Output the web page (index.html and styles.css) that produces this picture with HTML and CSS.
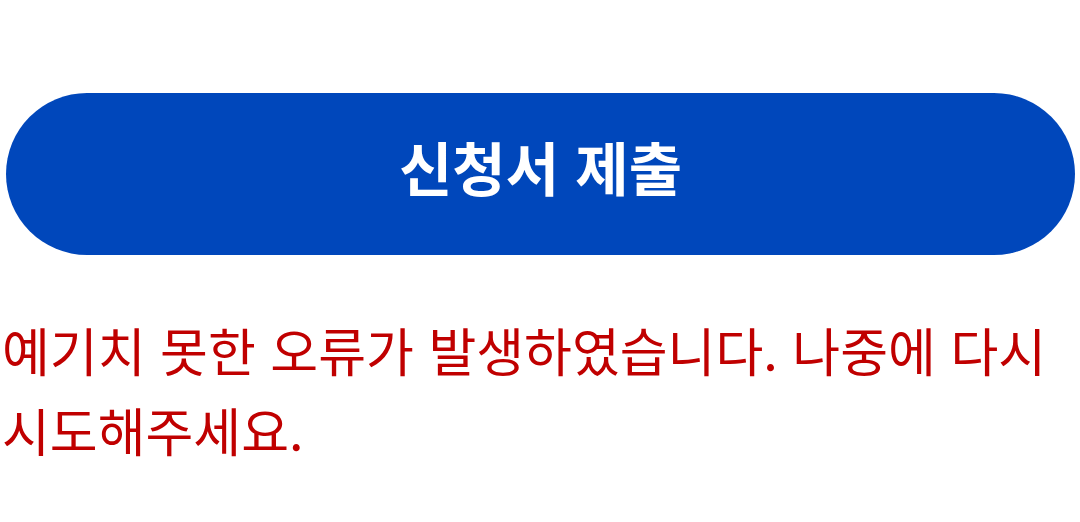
FILE: index.html
```html
<!DOCTYPE html>
<html lang="ko">
<head>
<meta charset="utf-8">
<link rel="stylesheet" href="styles.css">
</head>
<body>
<div class="page">
  <button class="submit" type="button"><span class="label">신청서 제출</span></button>
  <p class="error">예기치 못한 오류가 발생하였습니다. 나중에 다시 시도해주세요.</p>
</div>
</body>
</html>
```
FILE: styles.css
```css
html, body {
  margin: 0;
  padding: 0;
  background: #ffffff;
}
.page {
  padding: 93px 6px 0 2px;
  font-family: "Noto Sans CJK KR", "Noto Sans", sans-serif;
}
.submit {
  display: flex;
  align-items: center;
  justify-content: center;
  width: calc(100% - 3px);
  margin-left: 4px;
  height: 162px;
  border: none;
  border-radius: 81px;
  background: #0047bb;
  color: #ffffff;
  font-family: "Noto Sans CJK KR", "Noto Sans", sans-serif;
  font-weight: 700;
  font-size: 58px;
  line-height: 1;
  padding: 0 0 16px 0;
}
.error {
  margin: 55px 0 0 0;
  color: #c00000;
  font-size: 52px;
  line-height: 80px;
}
```
